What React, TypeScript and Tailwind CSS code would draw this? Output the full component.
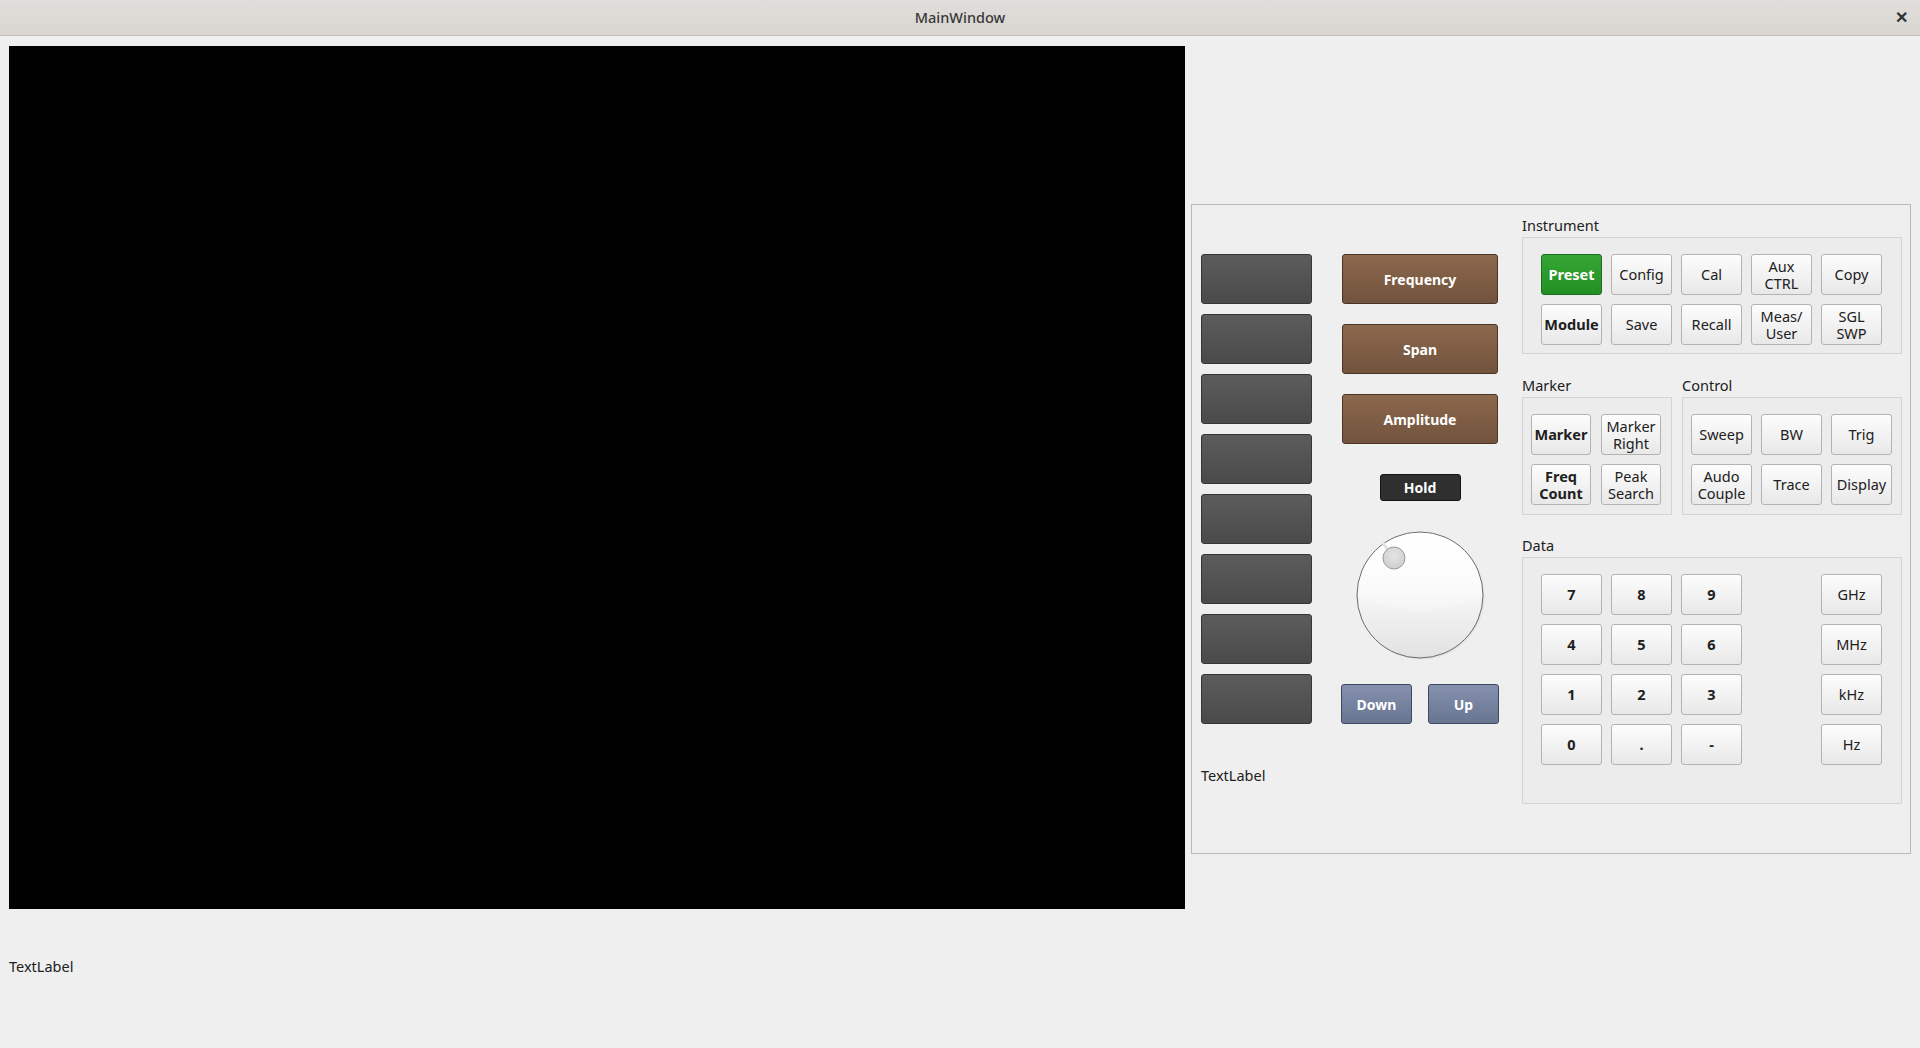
import React from 'react';

const font = { fontFamily: '"Noto Sans", "Open Sans", sans-serif' };

const LightBtn: React.FC<{ label: string; bold?: boolean; w?: string }> = ({ label, bold, w = 'w-[61px]' }) => (
    <button
        className={`${w} h-[41px] rounded-[3px] border border-[#b3b3b3] bg-gradient-to-b from-[#fdfdfd] to-[#e8e8e8] text-[14.5px] leading-[17px] text-[#202020] whitespace-pre-line flex items-center justify-center text-center ${bold ? 'font-bold' : ''}`}
    >
        {label}
    </button>
);

const GroupLabel: React.FC<{ text: string }> = ({ text }) => (
    <div className="h-[18px] leading-[18px] text-[14.5px] text-[#202020]">{text}</div>
);

const Knob: React.FC = () => (
    <svg width="129" height="129" viewBox="0 0 129 129">
        <defs>
            <linearGradient id="knobFace" x1="0" y1="0" x2="0" y2="1">
                <stop offset="0" stopColor="#ffffff" />
                <stop offset="0.5" stopColor="#f6f6f6" />
                <stop offset="1" stopColor="#e2e2e2" />
            </linearGradient>
            <linearGradient id="knobGloss" x1="0" y1="0" x2="0" y2="1">
                <stop offset="0" stopColor="#ffffff" stopOpacity="0.9" />
                <stop offset="1" stopColor="#ffffff" stopOpacity="0.2" />
            </linearGradient>
            <radialGradient id="knobDot" cx="0.5" cy="0.4" r="0.6">
                <stop offset="0" stopColor="#e4e4e4" />
                <stop offset="1" stopColor="#cfcfcf" />
            </radialGradient>
        </defs>
        <circle cx="65.5" cy="65.5" r="63" fill="#d9d9d9" opacity="0.5" />
        <circle cx="64" cy="64" r="63" fill="url(#knobFace)" stroke="#6b6b6b" strokeWidth="1" />
        <path d="M2 64 A62 62 0 0 1 126 64 Q64 96 2 64 Z" fill="url(#knobGloss)" />
        <line x1="32" y1="19" x2="27" y2="12" stroke="#e2e2e2" strokeWidth="3" />
        <circle cx="38" cy="27" r="11" fill="url(#knobDot)" stroke="#9a9a9a" strokeWidth="1" />
    </svg>
);

export default function App() {
    const instrument = [
        { l: 'Config' }, { l: 'Cal' }, { l: 'Aux\nCTRL' }, { l: 'Copy' },
    ];
    const instrument2 = [
        { l: 'Save' }, { l: 'Recall' }, { l: 'Meas/\nUser' }, { l: 'SGL\nSWP' },
    ];
    const digits = [
        ['7', '8', '9', 'GHz'],
        ['4', '5', '6', 'MHz'],
        ['1', '2', '3', 'kHz'],
        ['0', '.', '-', 'Hz'],
    ];

    return (
        <div className="w-[1920px] h-[1048px] bg-[#efefef] flex flex-col overflow-hidden" style={font}>
            {/* title bar */}
            <div className="relative h-[36px] shrink-0 bg-gradient-to-b from-[#e0ddda] to-[#d9d6d2] border-b border-[#c3bbb3] flex items-center justify-center">
                <span className="text-[14.5px] font-medium text-[#383838]">MainWindow</span>
                <span className="absolute right-[12px] top-[8px] text-[16px] leading-[18px] font-bold text-[#2e3436]">✕</span>
            </div>

            <div className="flex">
                {/* left: display + label */}
                <div className="flex flex-col pl-[9px] pt-[10px]">
                    <div className="w-[1176px] h-[863px] bg-black" />
                    <div className="mt-[47px] text-[14.5px] leading-[20px] text-[#202020]">TextLabel</div>
                </div>

                {/* right control panel */}
                <div className="ml-[6px] mt-[168px] w-[720px] h-[650px] border border-[#b9b9b9] flex">
                    {/* soft keys */}
                    <div className="pl-[9px] pt-[49px] flex flex-col">
                        <div className="flex flex-col gap-[10px]">
                            {Array.from({ length: 8 }).map((_, i) => (
                                <div
                                    key={i}
                                    className="w-[111px] h-[50px] rounded-[3px] border border-[#363636] bg-gradient-to-b from-[#5c5c5c] to-[#4a4a4a]"
                                />
                            ))}
                        </div>
                        <div className="mt-[41px] text-[14.5px] leading-[20px] text-[#202020]">TextLabel</div>
                    </div>

                    {/* main function keys + knob */}
                    <div className="ml-[29px] pt-[49px] w-[158px] flex flex-col items-center">
                        <div className="flex flex-col gap-[20px]">
                            {['Frequency', 'Span', 'Amplitude'].map((t) => (
                                <button
                                    key={t}
                                    className="w-[156px] h-[50px] rounded-[3px] border border-[#4b3426] bg-gradient-to-b from-[#8c684d] to-[#72533d] text-white font-bold text-[14px]"
                                >
                                    {t}
                                </button>
                            ))}
                        </div>
                        <div className="mt-[30px] w-[81px] h-[27px] rounded-[3px] border border-[#151515] bg-[#2f2f2f] text-white font-bold text-[14px] flex items-center justify-center">
                            Hold
                        </div>
                        <div className="mt-[30px] ml-[1px]">
                            <Knob />
                        </div>
                        <div className="mt-[24px] w-full flex justify-between">
                            {['Down', 'Up'].map((t) => (
                                <button
                                    key={t}
                                    className="w-[71px] h-[40px] rounded-[3px] border border-[#3e4961] bg-gradient-to-b from-[#8591ae] to-[#687591] text-white font-bold text-[14px]"
                                >
                                    {t}
                                </button>
                            ))}
                        </div>
                    </div>

                    {/* groups */}
                    <div className="ml-[23px] pt-[11px] w-[380px] flex flex-col">
                        <GroupLabel text="Instrument" />
                        <div className="mt-[3px] h-[117px] border border-[#d3d3d3] bg-[#ececec] pl-[18px] pt-[16px] flex flex-col gap-[9px]">
                            <div className="flex gap-[9px]">
                                <button className="w-[61px] h-[41px] rounded-[3px] border border-[#1d6b1d] bg-gradient-to-b from-[#35a635] to-[#228f22] text-white font-bold text-[14.5px]">
                                    Preset
                                </button>
                                {instrument.map((b) => (
                                    <LightBtn key={b.l} label={b.l} />
                                ))}
                            </div>
                            <div className="flex gap-[9px]">
                                <LightBtn label="Module" bold />
                                {instrument2.map((b) => (
                                    <LightBtn key={b.l} label={b.l} />
                                ))}
                            </div>
                        </div>

                        <div className="mt-[22px] flex gap-[10px]">
                            <div className="flex flex-col">
                                <GroupLabel text="Marker" />
                                <div className="mt-[3px] w-[150px] h-[118px] border border-[#d3d3d3] bg-[#ececec] pl-[8px] pt-[16px] flex flex-col gap-[9px]">
                                    <div className="flex gap-[10px]">
                                        <LightBtn label="Marker" bold w="w-[60px]" />
                                        <LightBtn label={'Marker\nRight'} w="w-[60px]" />
                                    </div>
                                    <div className="flex gap-[10px]">
                                        <LightBtn label={'Freq\nCount'} bold w="w-[60px]" />
                                        <LightBtn label={'Peak\nSearch'} w="w-[60px]" />
                                    </div>
                                </div>
                            </div>
                            <div className="flex flex-col">
                                <GroupLabel text="Control" />
                                <div className="mt-[3px] w-[220px] h-[118px] border border-[#d3d3d3] bg-[#ececec] pl-[8px] pt-[16px] flex flex-col gap-[9px]">
                                    <div className="flex gap-[9px]">
                                        <LightBtn label="Sweep" />
                                        <LightBtn label="BW" />
                                        <LightBtn label="Trig" />
                                    </div>
                                    <div className="flex gap-[9px]">
                                        <LightBtn label={'Audo\nCouple'} />
                                        <LightBtn label="Trace" />
                                        <LightBtn label="Display" />
                                    </div>
                                </div>
                            </div>
                        </div>

                        <div className="mt-[21px]">
                            <GroupLabel text="Data" />
                        </div>
                        <div className="mt-[3px] h-[247px] border border-[#d3d3d3] bg-[#ececec] pl-[18px] pt-[16px] flex flex-col gap-[9px]">
                            {digits.map((row, r) => (
                                <div key={r} className="flex gap-[9px]">
                                    <LightBtn label={row[0]} bold />
                                    <LightBtn label={row[1]} bold />
                                    <LightBtn label={row[2]} bold />
                                    <div className="w-[61px]" />
                                    <LightBtn label={row[3]} />
                                </div>
                            ))}
                        </div>
                    </div>
                </div>
            </div>
        </div>
    );
}
